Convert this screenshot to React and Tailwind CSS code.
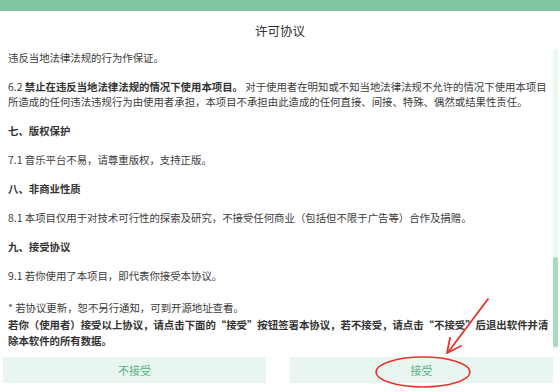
import React from 'react'

const font = { fontFamily: '"Noto Sans CJK SC", "Noto Sans", sans-serif' }

function Para({ children, bold }) {
  return (
    <div className={`whitespace-nowrap leading-[15px] ${bold ? 'font-bold text-[#333]' : ''}`}>
      {children}
    </div>
  )
}

export default function App() {
  return (
    <div className="relative w-[560px] h-[392px] bg-white overflow-hidden text-[#3c3c3c]" style={font}>
      {/* top bar */}
      <div className="h-[11px] bg-[#80c59f]" />

      {/* title */}
      <div className="h-[38px] flex items-center justify-center text-[12.5px] text-[#333] pt-[3px]">
        许可协议
      </div>

      {/* scroll area */}
      <div className="flex h-[301px]">
        <div className="flex-1 pl-[8px] pt-[1px] overflow-hidden text-[10.4px] flex flex-col gap-[14px]">
          <Para>违反当地法律法规的行为作保证。</Para>
          <div>
            <Para>
              6.2 <span className="font-bold text-[#333]">禁止在违反当地法律法规的情况下使用本项目。</span> 对于使用者在明知或不知当地法律法规不允许的情况下使用本项目
            </Para>
            <Para>所造成的任何违法违规行为由使用者承担，本项目不承担由此造成的任何直接、间接、特殊、偶然或结果性责任。</Para>
          </div>
          <Para bold>七、版权保护</Para>
          <Para>7.1 音乐平台不易，请尊重版权，支持正版。</Para>
          <Para bold>八、非商业性质</Para>
          <Para>8.1 本项目仅用于对技术可行性的探索及研究，不接受任何商业（包括但不限于广告等）合作及捐赠。</Para>
          <Para bold>九、接受协议</Para>
          <Para>9.1 若你使用了本项目，即代表你接受本协议。</Para>
          <div className="mt-[2px]">
            <div className="whitespace-nowrap leading-[18px]">* 若协议更新，恕不另行通知，可到开源地址查看。</div>
            <div className="whitespace-nowrap leading-[16px] font-bold text-[#333]">
              若你（使用者）接受以上协议，请点击下面的“接受”按钮签署本协议，若不接受，请点击“不接受”后退出软件并清
            </div>
            <div className="whitespace-nowrap leading-[16px] font-bold text-[#333]">除本软件的所有数据。</div>
          </div>
        </div>

        {/* scrollbar */}
        <div className="w-[5px] mr-[2px] bg-[#edf7f1] rounded-full flex flex-col">
          <div className="h-[208px]" />
          <div className="h-[90px] bg-[#a6dbbd] rounded-full" />
        </div>
      </div>

      {/* buttons */}
      <div className="flex gap-[24px] pl-[3px] pr-[7px] mt-[7px]">
        <button className="flex-1 h-[26px] bg-[#e9f6ef] text-[#56b382] text-[11px]" style={font}>
          不接受
        </button>
        <button className="flex-1 h-[26px] bg-[#e9f6ef] text-[#56b382] text-[11px]" style={font}>
          接受
        </button>
      </div>

      {/* red annotation */}
      <svg className="absolute left-0 top-0 pointer-events-none" width="560" height="392">
        <ellipse cx="423" cy="372" rx="47" ry="15" fill="none" stroke="#e8322d" strokeWidth="1.6" />
        <line x1="488" y1="299" x2="449" y2="351" stroke="#e8322d" strokeWidth="1.8" strokeLinecap="round" />
        <path d="M447 353 L450 338 M447 353 L461 346" stroke="#e8322d" strokeWidth="1.8" strokeLinecap="round" fill="none" />
      </svg>
    </div>
  )
}
